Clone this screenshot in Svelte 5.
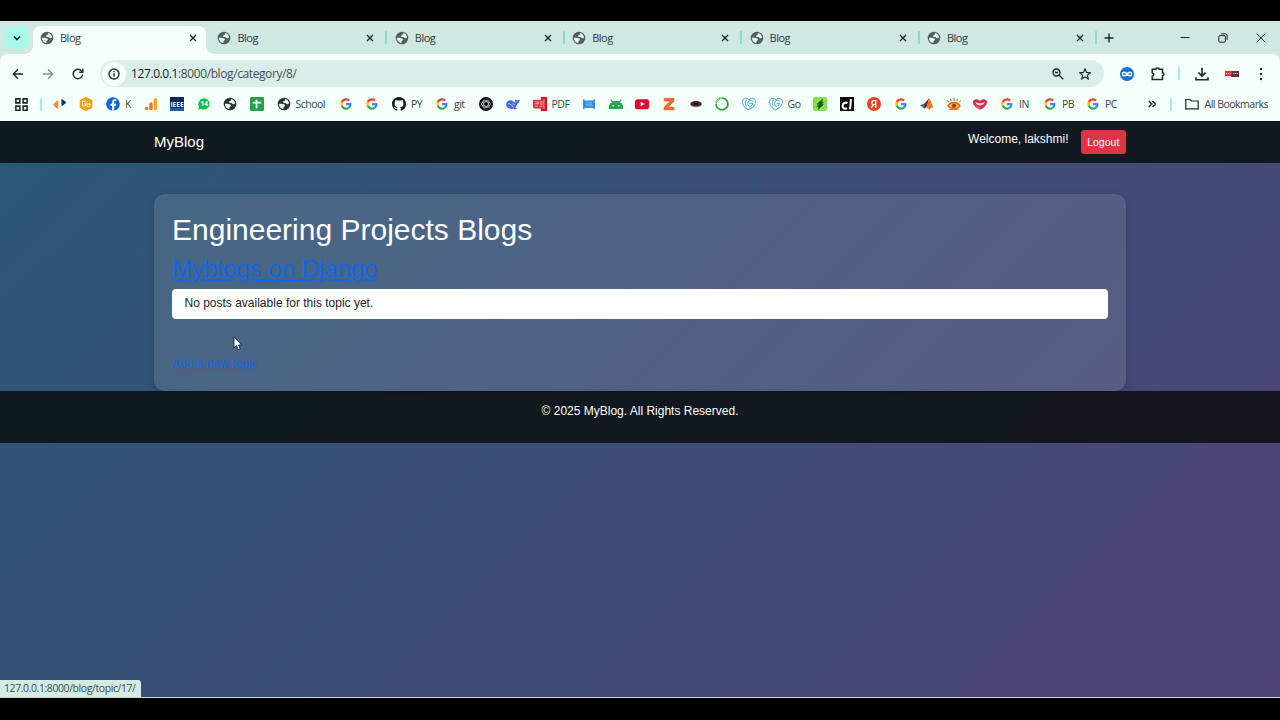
<script lang="ts">
  type Bookmark = { icon: string; width: number; label?: string };

  const tabs = [1, 2, 3, 4, 5, 6].map((id) => ({ id, title: 'Blog', active: id === 1 }));

  // width is the whole slot, icon + label + spacing to the next one
  const bookmarks: Bookmark[] = [
    { icon: 'arrows', width: 26.5 },
    { icon: 'cloud', width: 27 },
    { icon: 'facebook', width: 37.5, label: 'K' },
    { icon: 'analytics', width: 26.5 },
    { icon: 'ieee', width: 26.5 },
    { icon: 'chat', width: 26.5 },
    { icon: 'globe', width: 26.5 },
    { icon: 'sheets', width: 27 },
    { icon: 'globe', width: 62, label: 'School' },
    { icon: 'google', width: 26.5 },
    { icon: 'google', width: 27 },
    { icon: 'github', width: 43, label: 'PY' },
    { icon: 'google', width: 44, label: 'git' },
    { icon: 'gpt', width: 27 },
    { icon: 'whale', width: 26.5 },
    { icon: 'pdf', width: 49, label: 'PDF' },
    { icon: 'frame', width: 27 },
    { icon: 'android', width: 26.5 },
    { icon: 'youtube', width: 27 },
    { icon: 'zed', width: 26.5 },
    { icon: 'lips', width: 26.5 },
    { icon: 'ring', width: 27 },
    { icon: 'heart', width: 26.5 },
    { icon: 'heart', width: 44.5, label: 'Go' },
    { icon: 'leaf', width: 26.5 },
    { icon: 'cl', width: 27 },
    { icon: 'yandex', width: 27 },
    { icon: 'google', width: 26.5 },
    { icon: 'matlab', width: 26.5 },
    { icon: 'eye', width: 26.5 },
    { icon: 'kiss', width: 27 },
    { icon: 'google', width: 43, label: 'IN' },
    { icon: 'google', width: 43, label: 'PB' },
    { icon: 'google', width: 36, label: 'PC' }
  ];
</script>

{#snippet icon(name: string)}
  <svg class="icon" viewBox="0 0 16 16" aria-hidden="true">
    {#if name === 'globe'}
      <circle cx="8" cy="8" r="7.200" fill="currentColor" />
      <path d="M9 2.300c2.700.4 4.700 2.600 4.800 5.400-.9-.3-1.300.8-2.300.7-1-.1-.7-1.400-1.700-1.500-1.200-.1-2.300.2-2.800-.7-.4-.9.500-1.500 1.300-1.700.9-.2 1.100-1.300.7-2.200z" fill="#e6f5f0" />
      <path d="M2.200 8c1.600-.4 2.900-.1 4.100.1 1.500.2 3 .8 2.800 2-.2 1-1.500.9-1.700 1.900-.1.700 0 1.200-.4 1.800C4.200 13.400 2.200 11 2.200 8z" fill="#e6f5f0" />
    {:else if name === 'google'}
      <g transform="translate(1.500 1.500) scale(.271)">
        <path fill="#ea4335" d="M24 9.500c3.540 0 6.710 1.220 9.210 3.600l6.850-6.850C35.900 2.380 30.470 0 24 0 14.620 0 6.510 5.380 2.560 13.220l7.980 6.190C12.430 13.720 17.740 9.500 24 9.500z" />
        <path fill="#4285f4" d="M46.980 24.550c0-1.570-.15-3.090-.38-4.550H24v9.020h12.940c-.58 2.960-2.260 5.480-4.780 7.180l7.730 6c4.510-4.180 7.090-10.360 7.090-17.650z" />
        <path fill="#fbbc05" d="M10.530 28.590c-.48-1.450-.76-2.990-.76-4.590s.27-3.140.76-4.590l-7.980-6.190C.92 16.460 0 20.120 0 24c0 3.880.92 7.540 2.560 10.780l7.970-6.190z" />
        <path fill="#34a853" d="M24 48c6.480 0 11.930-2.130 15.890-5.810l-7.730-6c-2.150 1.450-4.920 2.300-8.160 2.300-6.260 0-11.570-4.220-13.470-9.910l-7.980 6.190C6.510 42.620 14.620 48 24 48z" />
      </g>
    {:else if name === 'github'}
      <path fill="#161b1d" d="M8 0C3.580 0 0 3.580 0 8c0 3.540 2.290 6.530 5.470 7.590.4.070.55-.17.55-.38 0-.19-.01-.82-.01-1.490-2.010.37-2.530-.49-2.690-.94-.09-.23-.48-.94-.82-1.130-.28-.15-.68-.52-.01-.53.63-.01 1.080.58 1.230.82.72 1.210 1.870.87 2.330.66.070-.52.28-.87.51-1.070-1.780-.2-3.640-.89-3.640-3.950 0-.87.31-1.590.82-2.150-.08-.2-.36-1.020.08-2.120 0 0 .67-.21 2.200.82.64-.18 1.320-.27 2-.27s1.360.09 2 .27c1.530-1.040 2.200-.82 2.200-.82.44 1.100.16 1.920.08 2.120.51.56.82 1.270.82 2.150 0 3.070-1.870 3.750-3.650 3.950.29.25.54.73.54 1.480 0 1.070-.01 1.930-.01 2.200 0 .21.15.46.55.38A8.010 8.010 0 0 0 16 8c0-4.420-3.580-8-8-8z" />
    {:else if name === 'arrows'}
      <path d="M1.300 8.700 5.200 5v7.500z" fill="#f08a4b" stroke="#f08a4b" stroke-width="1.800" stroke-linejoin="round" />
      <path d="M10.300 3v6.500l4-3.200z" fill="#123c4a" stroke="#123c4a" stroke-width="1.400" stroke-linejoin="round" />
    {:else if name === 'cloud'}
      <path d="M8 .8l6.500 3.400v7.600L8 15.200l-6.500-3.400V4.200z" fill="#eda21e" stroke="#eda21e" stroke-width="1.500" stroke-linejoin="round" />
      <path d="M7.500 5H4v5h3.500V8H6M9 6.500v4.300h3.500V8H9" fill="none" stroke="#fff1c9" stroke-width="1.100" />
    {:else if name === 'facebook'}
      <circle cx="8" cy="8" r="7.800" fill="#0b66e0" />
      <path d="M7 15.800V10H5V7.600h2V6c0-2.200 1.200-3.400 3.300-3.400l1.500.1v2h-1.100c-1 0-1.300.5-1.300 1.300v1.600h2.300L11.300 10H9.400v5.800z" fill="#fff" />
    {:else if name === 'analytics'}
      <rect x="11" y="1" width="4" height="14" rx="2" fill="#f5a623" />
      <rect x="6" y="6" width="4" height="9" rx="2" fill="#e8772e" />
      <circle cx="3" cy="13" r="2" fill="#e8772e" />
    {:else if name === 'ieee'}
      <rect width="16" height="16" fill="#06285c" />
      <path d="M0 12.500h16V16H0z" fill="#1e5aa0" />
      <text x="8" y="11" text-anchor="middle" textLength="15" lengthAdjust="spacingAndGlyphs" font-size="8.500" font-weight="700" fill="#e8f2f8">IEEE</text>
    {:else if name === 'chat'}
      <path d="M1.500 14.500l1-3.200a6.400 6.400 0 1 1 2.600 2.400z" fill="#16bd4a" />
      <text x="8.300" y="10.800" text-anchor="middle" font-size="7.500" font-weight="700" fill="#fff">14</text>
    {:else if name === 'sheets'}
      <rect width="16" height="16" rx="1.500" fill="#24a148" />
      <path d="M3 6.500h10M7.500 3v10" stroke="#fff" stroke-width="2" />
    {:else if name === 'gpt'}
      <circle cx="8" cy="8" r="8" fill="#0d1114" />
      <g fill="none" stroke="#cad4d3" stroke-width=".8">
        <ellipse cx="8" cy="8" rx="5" ry="2.600" />
        <ellipse cx="8" cy="8" rx="5" ry="2.600" transform="rotate(60 8 8)" />
        <ellipse cx="8" cy="8" rx="5" ry="2.600" transform="rotate(120 8 8)" />
      </g>
    {:else if name === 'whale'}
      <path d="M.3 7.500C1 3.500 5 2.700 7.700 4.500c1.300.8 2.300 2 3.600 1.700-1-1-1.400-2.700-.9-3.900.7 1.200 1.500 1.600 2.500 1.600.8 0 2-.5 2.900-.7-.2 2.300-1.200 3.700-2.800 4.100-.3 2-1.200 3.500-2.500 4.600l2.300 1.300c-1.600 1.200-3.300.9-4.800.3C4 14.300-.2 12 .3 7.500z" fill="#4565e8" />
      <path d="M2.500 7.500c2.600.2 4.200 1.700 5.700 4.300M7.500 7.700c1-.2 2 .6 2.200 1.800" stroke="#dfeafa" fill="none" />
    {:else if name === 'pdf'}
      <path d="M9 0h7v16H9z" fill="#d4151f" />
      <rect x="0" y="3" width="12" height="10" rx="1.500" fill="#dd3138" />
      <path d="M2 5.500h4v2.300H2M2 10.500h4M7.500 5.500H11M7.500 8H11M7.500 10.500H11M12.500 2v12" stroke="#f8d5d5" stroke-width=".9" fill="none" />
    {:else if name === 'frame'}
      <path d="M2 2.500v11.500M14 2.500v11.500" stroke="#5590c4" stroke-width="1.800" />
      <rect x="2" y="4" width="12" height="8.500" fill="#2b8be0" />
      <path d="M4 6.500h8M4 8.300h8M4 10h8" stroke="#8fc8f4" stroke-width=".8" />
    {:else if name === 'android'}
      <path d="M0 13c0-4.500 3.500-8 8-8s8 3.500 8 8zM2 3l3 4M14 3l-3 4" fill="#2fa455" stroke="#2fa455" stroke-width="1.200" />
      <circle cx="4.800" cy="10" r=".9" fill="#f5fffb" />
      <circle cx="11.200" cy="10" r=".9" fill="#f5fffb" />
    {:else if name === 'youtube'}
      <rect x="0" y="2.500" width="16" height="11.500" rx="3" fill="#e4002f" />
      <path d="M6.500 5.500v5L11 8z" fill="#fff" />
    {:else if name === 'zed'}
      <path d="M2 1h12v4L7.500 11.500H14V15H2v-3.500L8.500 5H2z" fill="#f26b34" />
    {:else if name === 'lips'}
      <ellipse cx="8" cy="8" rx="6.500" ry="3.500" fill="#4b2b33" />
      <path d="M4 8c2-1.300 6-1.300 8 0-2 1-6 1-8 0z" fill="#0d0809" />
      <path d="M4 10.500c2 1 6 1 8 0" stroke="#b58d93" fill="none" />
    {:else if name === 'ring'}
      <circle cx="8" cy="8" r="6.800" fill="none" stroke="#37a53b" stroke-width="2" />
      <path d="M1.200 8A6.800 6.800 0 0 1 8 1.200" fill="none" stroke="#f5fffb" stroke-width="2.200" stroke-dasharray=".7 1.300" />
    {:else if name === 'heart'}
      <g fill="none" stroke="#62b9cc" stroke-width="1.200" stroke-linecap="round">
        <path d="M6.800 14.800C3 12 .5 9.200.5 5.700c0-4.300 5.200-6 7.500-2.300 2.300-3.500 7.500-1.800 7.500 2.200 0 3.500-4 7.500-8.700 9.200z" />
        <path d="M12 4.500C9 2.500 6.300 5.400 6.500 8c.3 3.600 5.200 3.200 5.500-.5H9M5.500 3.500C3 5 3.500 8.500 5 10" />
      </g>
    {:else if name === 'leaf'}
      <rect width="16" height="16" rx="2.500" fill="#86df4e" />
      <path d="M11 2.500 4.500 8.300l3.200-.5-3.200 3.300 2.500-.5L6 14l6-5.500-3 .6 3-3.300-2.500.5z" fill="#174f1c" stroke="#174f1c" stroke-width=".7" />
    {:else if name === 'cl'}
      <rect width="16" height="16" fill="#080d10" />
      <path d="M8.500 7.200C6.500 5.500 3 7 3 10.200c0 3.100 2.800 3.900 5 2.500M12.500 2.500 11.500 14" stroke="#fff" stroke-width="2.400" fill="none" />
    {:else if name === 'yandex'}
      <circle cx="8" cy="8" r="8" fill="#e9401f" />
      <text x="8" y="12.300" text-anchor="middle" font-size="12" font-weight="600" fill="#fff">Я</text>
    {:else if name === 'matlab'}
      <path d="M0 9.500 5 7.500 8 10l-3 3.500z" fill="#2c78ad" />
      <path d="M5 7.500C7 6 8.500 3.500 10.500 1.500L8 10l-3 3.500z" fill="#712519" />
      <path d="M10.500 1.500c2 2.500 3 7.500 5.500 11-2-1-3.500-.5-5 2.500-1-2.500-2.500-2.500-4-2 1.500-3 2-8 3.500-11.500z" fill="#e6792b" />
    {:else if name === 'eye'}
      <path d="M1 10c3-5 11-5 14 0-3 4.500-11 4.500-14 0z" fill="#f6b63c" stroke="#d86618" stroke-width="1.500" />
      <circle cx="8" cy="10" r="2.300" fill="#9c3b15" />
      <path d="M2 6 .5 4M5 4.800 4 2M8 4.500V1M11 4.800 12 2M14 6l1.500-2M2.500 14h11" stroke="#d86618" stroke-width="1.300" />
    {:else if name === 'kiss'}
      <path d="M0 5C1.500 1.500 6 2 8 4.500 10 2 14.500 1.500 16 5c.5 4-4 8-8 9.500C4 13 -.5 9 0 5z" fill="#d42a4e" />
      <path d="M2.500 6.300c2 .2 3.500.7 5.500.7s3.500-.5 5.500-.7c-1 2.400-3.500 3.400-5.500 3.400s-4.500-1-5.500-3.400z" fill="#f7d6dc" />
      <path d="M3 10.500c2 2 4 2.500 6 2" stroke="#eb8297" fill="none" />
    {/if}
  </svg>
{/snippet}

<div class="screen">
  <header class="browser">
    <div class="tabstrip">
      <button class="tab-search" aria-label="Search tabs">
        <svg viewBox="0 0 12 12" class="line"><path d="M3 4.500l3 3 3-3" stroke-width="1.700" /></svg>
      </button>
      <div class="tabs">
        {#each tabs as tab (tab.id)}
          <div class="tab" class:active={tab.active}>
            <div class="tab-body">
              {@render icon('globe')}
              <span class="tab-title">{tab.title}</span>
              <svg viewBox="0 0 8 8" class="line close"><path d="M1 1l6 6M7 1L1 7" /></svg>
            </div>
            {#if !tab.active}<i class="divider"></i>{/if}
          </div>
        {/each}
      </div>
      <svg viewBox="0 0 10 10" class="line plus"><path d="M5 .5v9M.5 5h9" /></svg>
      <div class="window-controls">
        <svg viewBox="0 0 10 10" class="line thin"><path d="M.5 4.500h9" /></svg>
        <svg viewBox="0 0 10 10" class="line thin">
          <rect x=".8" y="2.600" width="6.600" height="6.600" rx="1.300" />
          <path d="M3 .8h4.200a2 2 0 0 1 2 2V7" />
        </svg>
        <svg viewBox="0 0 10 10" class="line thin"><path d="M.7.700l8.600 8.600M9.300.700.700 9.300" /></svg>
      </div>
    </div>

    <div class="toolbar">
      <div class="history">
        <svg viewBox="0 0 12 12" class="line"><path d="M11 6H1.500M6 1.300 1.300 6 6 10.700" /></svg>
        <svg viewBox="0 0 12 12" class="line disabled"><path d="M1 6h9.500M6 1.300 10.700 6 6 10.700" /></svg>
        <svg viewBox="0 0 12 12" class="line"><path d="M10.600 6.500A4.700 4.700 0 1 1 9.500 2.900l1 1.200M10.800.800v3.500H7.300" /></svg>
      </div>
      <div class="omnibox">
        <span class="site-info">
          <svg viewBox="0 0 12 12" class="line"><circle cx="6" cy="6" r="5" /><path d="M6 5.300v3.400M6 3v1.200" /></svg>
        </span>
        <span class="url"><b>127.0.0.1</b>:8000/blog/category/8/</span>
        <svg viewBox="0 0 12 12" class="line zoom"><circle cx="4.500" cy="4.500" r="3.500" /><path d="M7.200 7.200 11.300 11.300M3 4.500h3" /></svg>
        <svg viewBox="0 0 12 12" class="line star"><path d="M6 .8l1.500 3.600 3.900.3-3 2.500.9 3.800L6 9l-3.300 2 .9-3.800-3-2.500 3.900-.3z" stroke-width="1.100" /></svg>
      </div>
      <div class="extensions">
        <svg viewBox="0 0 14 14">
          <circle cx="7" cy="7" r="7" fill="#0d72d8" />
          <path d="M7 7C5.500 5 2.500 4.500 2.500 7S5.500 9 7 7s4.500-2.500 4.500 0S8.500 9 7 7z" fill="none" stroke="#fff" stroke-width="1.500" />
        </svg>
        <svg viewBox="0 0 14 14" class="line"><path d="M1.200 2.300h3.600a1.700 1.200 0 0 1 3.400 0h3.300v3.400a1.300 1.500 0 0 1 0 3v3.800H1.200V9.300c2.200-.2 2.200-3.200 0-3.400z" stroke-width="1.500" /></svg>
        <i class="divider"></i>
        <svg viewBox="0 0 14 14" class="line download"><path d="M7 .8v8M3.500 5.600 7 9.100l3.500-3.500M1 10.300v2.500h12v-2.500" stroke-width="1.600" /></svg>
        <svg viewBox="0 0 14 14" class="badge">
          <path d="M0 4h8v5H0z" fill="#d83a32" />
          <path d="M7 4h7v6H6z" fill="#5d3232" />
          <path d="M1 6.500h5M8 6.500h5" stroke="#efc6c0" stroke-dasharray="1.200 .6" />
        </svg>
        <svg viewBox="0 0 14 14" class="dots"><circle cx="7" cy="2" r="1.200" /><circle cx="7" cy="7" r="1.200" /><circle cx="7" cy="12" r="1.200" /></svg>
      </div>
    </div>

    <div class="bookmarks">
      <svg viewBox="0 0 12 12" class="line apps">
        <path d="M.8.800h3.700v3.700H.8zM7.500.800h3.700v3.700H7.500zM.8 7.500h3.700v3.700H.8zM7.500 7.500h3.700v3.700H7.500z" />
      </svg>
      <i class="divider"></i>
      <div class="bookmark-list">
        {#each bookmarks as bookmark}
          <span class="bookmark" style:width="{bookmark.width}px">
            {@render icon(bookmark.icon)}
            {#if bookmark.label}<span class="label">{bookmark.label}</span>{/if}
          </span>
        {/each}
      </div>
      <svg viewBox="0 0 8 8" class="line more"><path d="M.8 1 3.800 4 .8 7M4.500 1l3 3-3 3" /></svg>
      <i class="divider"></i>
      <svg viewBox="0 0 14 12" class="line folder"><path d="M.8 10.800V1.500H5L6.500 3h6.700v7.800z" stroke-width="1.200" /></svg>
      <span class="label">All Bookmarks</span>
    </div>
  </header>

  <div class="page">
    <nav class="navbar">
      <div class="container">
        <a class="brand" href="#home">MyBlog</a>
        <span class="welcome">Welcome, lakshmi!</span>
        <button class="logout">Logout</button>
      </div>
    </nav>

    <main class="container card">
      <h1>Engineering Projects Blogs</h1>
      <h2><a href="#topic">Myblogs on Django</a></h2>
      <ul class="posts">
        <li>No posts available for this topic yet.</li>
      </ul>
      <a class="add-topic" href="#new">Add a new topic</a>
    </main>

    <footer>
      <p>© 2025 MyBlog. All Rights Reserved.</p>
    </footer>

    <div class="status">127.0.0.1:8000/blog/topic/17/</div>
    <svg class="cursor" viewBox="0 0 10 15">
      <path d="M1 1v11l2.500-2.300 1.700 4 2-.9-1.700-3.800h3.200z" fill="#fff" stroke="#10202c" stroke-width=".9" />
    </svg>
  </div>
</div>

<style>
  :global(body) {
    margin: 0;
    background: #000;
  }

  .screen {
    display: flex;
    flex-direction: column;
    box-sizing: border-box;
    width: 1280px;
    height: 720px;
    padding: 21px 0 22px;
    overflow: hidden;
    background: #000;
  }

  svg {
    display: block;
    flex: none;
  }

  button {
    border: 0;
    padding: 0;
    font: inherit;
  }

  /* browser chrome */
  .browser {
    flex: none;
    height: 100px;
    background: #cfe9e2;
    color: #24312f;
    font-family: 'Open Sans', 'Noto Sans', sans-serif;
    font-size: 11px;
  }

  .icon {
    width: 14px;
    height: 14px;
  }

  .line {
    width: 12px;
    height: 12px;
    fill: none;
    stroke: #1c2726;
    stroke-width: 1.4;
  }

  .thin {
    stroke-width: 1;
  }

  .divider {
    flex: none;
    width: 2px;
    height: 13px;
    border-radius: 1px;
    background: #a6ece0;
  }

  .tabstrip {
    display: flex;
    align-items: center;
    height: 33px;
    padding-left: 5px;
  }

  .tab-search {
    display: grid;
    place-items: center;
    width: 24px;
    height: 23px;
    margin-right: 4px;
    border-radius: 7px;
    background: #a9f9ea;
  }

  .tabs {
    display: flex;
    align-self: stretch;
  }

  .tab {
    display: flex;
    align-items: center;
    width: 177.4px;
  }

  .tab-body {
    position: relative;
    display: flex;
    align-items: center;
    box-sizing: border-box;
    width: 173px;
    height: 28px;
    padding: 0 9px 4px 7px;
    margin-top: 5px;
    color: #51605e;
  }

  .active .tab-body {
    border-radius: 8px 8px 0 0;
    background: #f5fffb;
  }

  .active .tab-body::before,
  .active .tab-body::after {
    content: '';
    position: absolute;
    bottom: 0;
    width: 8px;
    height: 8px;
  }

  .active .tab-body::before {
    left: -8px;
    background: radial-gradient(circle at 0 0, transparent 7.5px, #f5fffb 8px);
  }

  .active .tab-body::after {
    right: -8px;
    background: radial-gradient(circle at 100% 0, transparent 7.5px, #f5fffb 8px);
  }

  .tab-title {
    flex: 1;
    margin: 0 0 2px 6px;
    color: #2c3a38;
    letter-spacing: -0.5px;
  }

  .close {
    width: 8px;
    height: 8px;
    stroke-width: 1.4;
  }

  .tab .divider {
    margin: 0 0 0 2px;
    background: #83dfca;
  }

  .plus {
    width: 10px;
    height: 10px;
    margin-left: 7px;
    stroke-width: 1.4;
  }

  .window-controls {
    display: flex;
    gap: 28px;
    margin-left: auto;
    padding-right: 14px;
  }

  .window-controls svg {
    width: 10px;
    height: 10px;
  }

  .toolbar {
    display: flex;
    align-items: center;
    height: 39px;
    padding-left: 12px;
    border-radius: 8px 8px 0 0;
    background: #f5fffb;
  }

  .history {
    display: flex;
    gap: 18px;
    width: 88px;
  }

  .disabled {
    opacity: 0.5;
  }

  .omnibox {
    display: flex;
    align-items: center;
    box-sizing: border-box;
    width: 1004px;
    height: 27px;
    padding: 0 13px 0 2px;
    border-radius: 14px;
    background: #daeee9;
  }

  .site-info {
    display: grid;
    place-items: center;
    width: 24px;
    height: 24px;
    border-radius: 50%;
    background: #f5fffb;
  }

  .url {
    flex: 1;
    margin-left: 5px;
    font-size: 12px;
    letter-spacing: -0.4px;
    color: #43504e;
  }

  .url b {
    font-weight: 400;
    color: #15201f;
  }

  .zoom {
    margin-right: 15px;
  }

  .extensions {
    display: flex;
    align-items: center;
    margin-left: 16px;
  }

  .extensions svg {
    width: 14px;
    height: 14px;
    margin-right: 17px;
  }

  .extensions .divider {
    margin: 0 15px 0 -4px;
  }

  .extensions .badge {
    margin-right: 15px;
  }

  .extensions .download {
    margin-right: 16px;
  }

  .extensions .dots {
    margin: 0;
    fill: #1c2726;
  }

  .bookmarks {
    display: flex;
    align-items: center;
    box-sizing: border-box;
    height: 28px;
    padding: 0 0 6px 15px;
    background: #f5fffb;
  }

  .apps {
    width: 13px;
    height: 13px;
    margin-right: 12px;
  }

  .bookmark-list {
    display: flex;
    margin-left: 10.5px;
  }

  .bookmark {
    display: flex;
    flex: none;
    align-items: center;
    gap: 5px;
    height: 16px;
    color: #2b3634;
  }

  .label {
    margin-bottom: 1px;
    color: #38443f;
    font-size: 10.5px;
    letter-spacing: -0.5px;
    white-space: nowrap;
  }

  .more {
    width: 8px;
    height: 8px;
    margin: 0 14px 0 25.5px;
  }

  .folder {
    width: 14px;
    margin: 0 6px 0 13px;
  }

  /* blog page */
  .page {
    position: relative;
    flex: 1;
    box-sizing: border-box;
    border-bottom: 1px solid #c9d3d6;
    background: linear-gradient(135deg, #2b5876, #4e4376);
    color: #fff;
    font: 12px/18px 'Liberation Sans', Arial, sans-serif;
  }

  .container {
    box-sizing: border-box;
    width: 972px;
    margin: 0 auto;
  }

  .navbar {
    height: 42px;
    background: rgba(6, 11, 11, 0.8);
  }

  .navbar .container {
    display: flex;
    align-items: center;
    height: 42px;
  }

  .brand {
    margin-right: auto;
    color: #fff;
    font-size: 15px;
    text-decoration: none;
  }

  .welcome {
    margin: 0 12px 6px 0;
  }

  .logout {
    width: 45.5px;
    height: 24px;
    border-radius: 3px;
    background: #dc3545;
    color: #fff;
    font-size: 10.5px;
  }

  .card {
    height: 197px;
    margin-top: 31px;
    padding: 18px;
    border-radius: 11px;
    background: rgba(255, 255, 255, 0.11);
    box-shadow: 0 3px 8px rgba(0, 0, 0, 0.2);
  }

  h1,
  h2 {
    margin: 0 0 6px;
    font-weight: 400;
  }

  h1 {
    font-size: 30px;
    line-height: 36px;
  }

  h2 {
    font-size: 24px;
    line-height: 29px;
  }

  .card a {
    color: #1368e8;
  }

  .posts {
    margin: 0 0 36px;
    padding: 0;
    list-style: none;
  }

  .posts li {
    padding: 5px 12.5px 7px;
    border-radius: 4px;
    background: #fff;
    color: #212529;
  }

  footer {
    position: relative;
    box-sizing: border-box;
    height: 52px;
    padding-top: 11px;
    background: rgba(6, 11, 11, 0.8);
    text-align: center;
  }

  footer p {
    margin: 0;
  }

  .status {
    position: absolute;
    left: 0;
    bottom: 0;
    box-sizing: border-box;
    width: 141px;
    height: 17px;
    padding-left: 4px;
    border-radius: 0 3px 0 0;
    background: #d3ede6;
    color: #3c4b49;
    font: 10.5px/17px 'Open Sans', 'Noto Sans', sans-serif;
    letter-spacing: -0.42px;
    white-space: nowrap;
  }

  .cursor {
    position: absolute;
    left: 233px;
    top: 215px;
    width: 10px;
    height: 15px;
  }
</style>
